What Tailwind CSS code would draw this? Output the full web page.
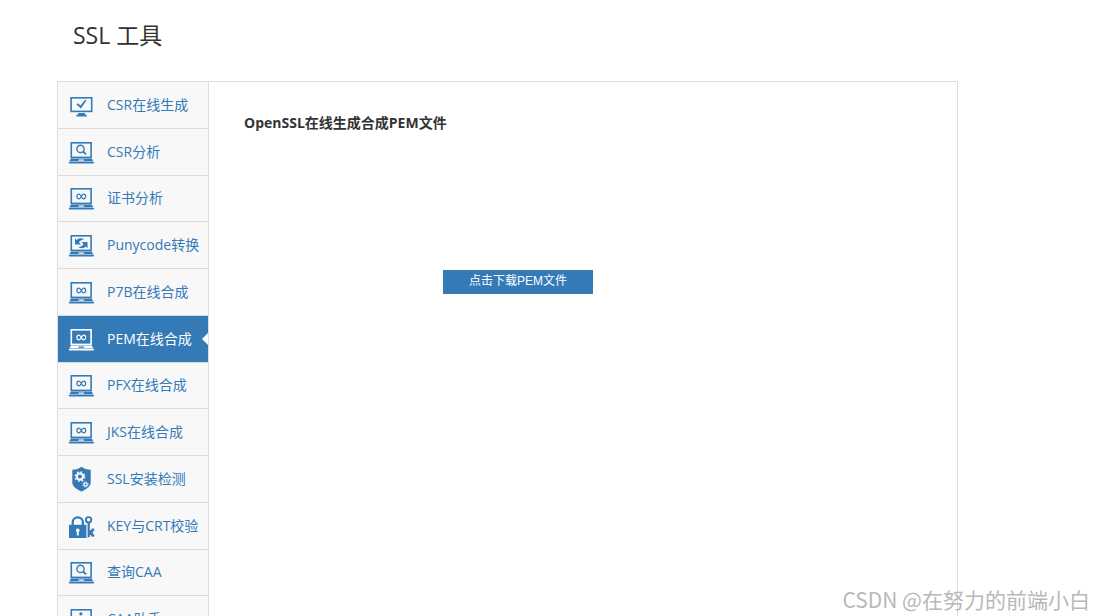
<!DOCTYPE html>
<html lang="zh-CN">
<head>
  <meta charset="UTF-8">
  <meta name="viewport" content="width=device-width, initial-scale=1.0">
  <title>SSL 工具</title>
  <script src="https://cdn.jsdelivr.net/npm/@tailwindcss/browser@4"></script>
</head>
<body class="relative h-screen overflow-hidden bg-white text-[#333] font-['Open_Sans','Noto_Sans_CJK_SC',sans-serif]">

  <!-- 图标 -->
  <svg class="hidden">
    <symbol id="laptop" viewBox="0 0 26 26">
      <rect x="2.8" y="3.8" width="19.8" height="14.6" fill="none" stroke="currentColor" stroke-width="1.6"/>
      <path d="M2.4 19.400h20.800l1.700 3H.8zM9.800 21.800h6l-.5-1.200h-5z" fill="currentColor" fill-rule="evenodd"/>
      <path d="M.2 22.900h25.400v1l-1 .700H1.200l-1-.700z" fill="currentColor"/>
    </symbol>
    <symbol id="infinity" viewBox="0 0 26 26">
      <use href="#laptop"/>
      <path d="M12.800 11.500c-.9-1.700-1.600-2.400-2.400-2.400a2 2.400 0 0 0 0 4.800c1 0 1.600-.8 2.400-2.400s1.500-2.400 2.400-2.400a2 2.400 0 0 1 0 4.800c-.9 0-1.600-.7-2.400-2.400z" fill="none" stroke="currentColor" stroke-width="1.200"/>
    </symbol>
    <symbol id="search" viewBox="0 0 26 26">
      <use href="#laptop"/>
      <circle cx="12" cy="9.900" r="3.600" fill="none" stroke="currentColor" stroke-width="1.400"/>
      <path d="M14.500 12.400l3 3" stroke="currentColor" stroke-width="2"/>
    </symbol>
    <symbol id="convert" viewBox="0 0 26 26">
      <use href="#laptop"/>
      <path d="M6.500 6.200v6.200h6l-2-2c.8-1.700 2.400-2.900 5.200-3-2.600-1.800-5.600-1.500-7.500.5zM19 16.200V10h-6l2 2c-.8 1.700-2.400 2.900-5.200 3 2.600 1.800 5.600 1.500 7.500-.5z" fill="currentColor"/>
    </symbol>
    <symbol id="monitor" viewBox="0 0 26 26">
      <rect x="2.600" y="5.800" width="20.600" height="13.600" fill="none" stroke="currentColor" stroke-width="1.600"/>
      <path d="M8 12.400l1.500-1.200 2.500 2.200 4.700-5.700 1.200.9-5.500 8z" fill="currentColor"/>
      <path d="M10 21h6.200l.6 1.500 1.600.8v1.300H7.800v-1.300l1.600-.8z" fill="currentColor"/>
    </symbol>
    <symbol id="shield" viewBox="0 0 26 26">
      <path d="M13 .8c2.500 2 5.500 2.800 9.200 3v12.700c0 4-4.500 7-9.200 9-4.700-2-9.200-5-9.200-9V3.800C7.500 3.600 10.500 2.800 13 .8z" fill="currentColor"/>
      <g fill="none" class="stroke-[#f8f8f8]">
        <circle cx="11.400" cy="10.600" r="3.100" stroke-width="2.200"/>
        <circle cx="11.400" cy="10.600" r="4.700" stroke-width="1.500" stroke-dasharray="1.850 1.840"/>
        <circle cx="17" cy="18.500" r="1.600" stroke-width="1.300"/>
        <circle cx="17" cy="18.500" r="2.600" stroke-width=".9" stroke-dasharray="1.020 1.020"/>
      </g>
    </symbol>
    <symbol id="lock" viewBox="0 0 27 26">
      <path d="M1 11.800h17.400V25H1z" fill="currentColor"/>
      <path d="M4.700 12V9.500a5.100 5.100 0 0 1 10.200 0V12" fill="none" stroke="currentColor" stroke-width="2.200"/>
      <path d="M9.800 15.600a1.900 1.900 0 0 1 1 3.500v3.300h-2v-3.300a1.900 1.900 0 0 1 1-3.500z" class="fill-[#f8f8f8]"/>
      <circle cx="20.600" cy="6.800" r="2.700" fill="none" stroke="currentColor" stroke-width="1.900"/>
      <path d="M19.600 9.500h2.200v7.800l1.500-.4.400-1.300h2.500v2.300l-1.400.5v2.500l1.400.6v2.300h-2.500l-.5-1.400-1.400-.5V24l-2.200.6z" fill="currentColor"/>
    </symbol>
    <symbol id="helper" viewBox="0 0 26 26">
      <use href="#laptop"/>
      <circle cx="12.400" cy="7.800" r="1.600" fill="currentColor"/>
      <path d="M8.500 10.800h6.500l-2 5" fill="none" stroke="currentColor" stroke-width="1.400"/>
    </symbol>
  </svg>

  <div class="pl-[57px]">
    <h1 class="h-[81px] pl-4 pt-[19px] text-[23px] leading-8">SSL 工具</h1>

    <div class="flex max-w-[901px] border border-[#ddd]">
      <!-- 左侧工具菜单 -->
      <nav class="grid h-[561px] w-[151px] shrink-0 grid-rows-12 border-r border-[#ddd] bg-[#f8f8f8] text-sm text-[#337ab7]">
        <a href="#" class="flex items-center gap-3 border-b border-[#ddd] pl-[10px] whitespace-nowrap"><svg class="h-[26px] w-[27px] shrink-0"><use href="#monitor"/></svg>CSR在线生成</a>
        <a href="#" class="flex items-center gap-3 border-b border-[#ddd] pl-[10px] whitespace-nowrap"><svg class="h-[26px] w-[27px] shrink-0"><use href="#search"/></svg>CSR分析</a>
        <a href="#" class="flex items-center gap-3 border-b border-[#ddd] pl-[10px] whitespace-nowrap"><svg class="h-[26px] w-[27px] shrink-0"><use href="#infinity"/></svg>证书分析</a>
        <a href="#" class="flex items-center gap-3 border-b border-[#ddd] pl-[10px] whitespace-nowrap"><svg class="h-[26px] w-[27px] shrink-0"><use href="#convert"/></svg>Punycode转换</a>
        <a href="#" class="flex items-center gap-3 border-b border-[#ddd] pl-[10px] whitespace-nowrap"><svg class="h-[26px] w-[27px] shrink-0"><use href="#infinity"/></svg>P7B在线合成</a>
        <a href="#" class="relative flex items-center gap-3 border-b border-[#ddd] bg-[#337ab7] pl-[10px] whitespace-nowrap text-white"><svg class="h-[26px] w-[27px] shrink-0"><use href="#infinity"/></svg>PEM在线合成
          <span class="absolute right-0 border-y-[6px] border-r-[6px] border-y-transparent border-r-white"></span>
        </a>
        <a href="#" class="flex items-center gap-3 border-b border-[#ddd] pl-[10px] whitespace-nowrap"><svg class="h-[26px] w-[27px] shrink-0"><use href="#infinity"/></svg>PFX在线合成</a>
        <a href="#" class="flex items-center gap-3 border-b border-[#ddd] pl-[10px] whitespace-nowrap"><svg class="h-[26px] w-[27px] shrink-0"><use href="#infinity"/></svg>JKS在线合成</a>
        <a href="#" class="flex items-center gap-3 border-b border-[#ddd] pl-[10px] whitespace-nowrap"><svg class="h-[26px] w-[27px] shrink-0"><use href="#shield"/></svg>SSL安装检测</a>
        <a href="#" class="flex items-center gap-3 border-b border-[#ddd] pl-[10px] whitespace-nowrap"><svg class="h-[26px] w-[27px] shrink-0"><use href="#lock"/></svg>KEY与CRT校验</a>
        <a href="#" class="flex items-center gap-3 border-b border-[#ddd] pl-[10px] whitespace-nowrap"><svg class="h-[26px] w-[27px] shrink-0"><use href="#search"/></svg>查询CAA</a>
        <a href="#" class="flex items-center gap-3 border-b border-[#ddd] pl-[10px] whitespace-nowrap"><svg class="h-[26px] w-[27px] shrink-0"><use href="#helper"/></svg>CAA助手</a>
      </nav>

      <!-- 下载 -->
      <main class="flex-1 px-[35px] pt-[31px]">
        <h2 class="text-sm font-bold">OpenSSL在线生成合成PEM文件</h2>
        <div class="pt-[137px] pl-[199px]">
          <button type="button" class="block h-6 w-[150px] bg-[#337ab7] pb-[2px] text-xs text-white font-['Liberation_Sans','Noto_Sans_CJK_SC',sans-serif]">点击下载PEM文件</button>
        </div>
      </main>
    </div>
  </div>

  <!-- 水印 -->
  <p class="absolute right-[5px] bottom-[3px] text-[21px] leading-7 text-[#b8b8b8] font-['Noto_Sans_CJK_SC',sans-serif]">CSDN @在努力的前端小白</p>
</body>
</html>
